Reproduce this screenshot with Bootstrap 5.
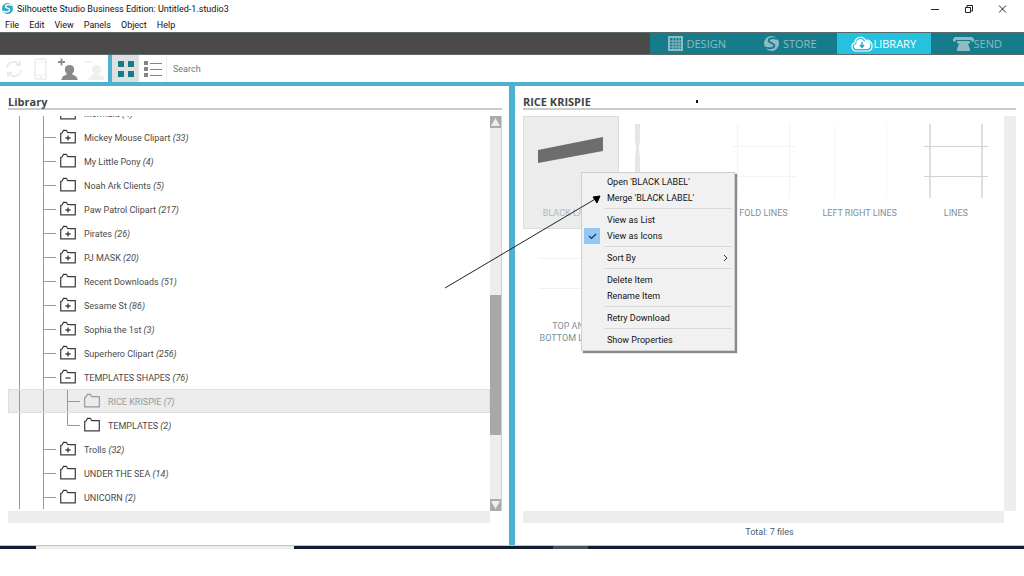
<!DOCTYPE html>
<html lang="en">
<head>
<meta charset="utf-8">
<meta name="viewport" content="width=device-width, initial-scale=1">
<title>Silhouette Studio Business Edition: Untitled-1.studio3</title>
<link href="https://cdn.jsdelivr.net/npm/bootstrap@5.3.0/dist/css/bootstrap.min.css" rel="stylesheet">
<style>
  :root { --accent: #4db1d1; --teal: #167c8c; --track: #ededed; }
  body { font: 9px/12px Roboto, "Open Sans", sans-serif; color: #111; background: #fff; }
  button, input { font: inherit; color: inherit; }
  svg { display: block; flex: none; }
  a { color: inherit; text-decoration: none; }
  .app-shell { height: 100vh; padding-bottom: 27px; }
  .title-bar { height: 17px; padding-left: 2px; }
  .win-btn { width: 34px; height: 16px; }
  .menu-bar { height: 15px; padding-left: 5px; gap: 10px; }
  .plain { border: 0; padding: 0; background: none; }
  .mode-bar { height: 23px; background: #4a4b49; border-block: 1px solid #5d6a6b; }
  .mode-tabs { width: 374px; background: var(--teal); }
  .mode-tab { flex: 1 1 0; font: 11px/20px "Open Sans", sans-serif; color: #8fbcc4; }
  .mode-tab.active { background: #25c1de; color: #fff; }
  .tool-bar { height: 31px; border-bottom: 4px solid var(--accent); }
  .tool-btn { width: 27px; }
  .tool-btn.active { background: #e0e0e0; }
  .tool-sep { width: 4px; background: var(--accent); }
  .search-box { border: 0; outline: 0; padding: 1px 6px 0; color: #555; border-left: 1px solid #eee; }
  .search-box::placeholder { color: #777; opacity: 1; }
  .pane-left { flex: 0 0 49.7%; padding: 0 7px 0 8px; }
  .pane-right { padding: 0 8px 0 8px; }
  .pane-split { width: 6px; background: var(--accent); }
  .pane-title { height: 24px; margin: 0 0 6px; padding: 8px 0 0; border-bottom: 2px solid #cbcbcb; font: bold 11px/16px "Open Sans", sans-serif; color: #444; }
  .tree-view { margin: -15px 0 0; color: #4a4a4a; }
  .tree-row { height: 24px; }
  .tree-row span { padding-top: 2px; }
  .tree-row.active { background: #ececec; outline: 1px solid #dedede; outline-offset: -1px; color: #999; }
  .tree-row .folder { margin-right: 8px; color: #3c3c3c; }
  .tree-row.active .folder { color: #999; }
  .v-track { width: 12px; background: var(--track); }
  .left-track { border-right: 1px solid #cfcfcf; }
  .arrow-btn { height: 12px; background: #aaa; }
  .thumb-bar { height: 140px; margin-top: 167px; background: #a8a8a8; }
  .h-track { height: 12px; margin-right: 12px; background: var(--track); }
  .pane-foot { height: 22px; color: #46606c; padding-top: 3px; }
  .file-grid { display: grid; grid-template-columns: repeat(5, 1fr); grid-auto-rows: 113px; }
  .file-tile { padding: 7px 4px 0; border: 1px solid transparent; color: #7c8f9a; text-align: center; }
  .file-tile.active { background: #ececec; border-color: #dcdcdc; color: #b0b7bb; }
  .file-tile svg { margin: 0 auto 9px; }
  .context-menu { left: 66px; top: 86px; width: 154px; padding: 1px 2px 2px; background: #f1f1f1; border: 1px solid #cfcfcf; box-shadow: 2px 2px 1px #8a8a8a; color: #111; z-index: 2; }
  .context-menu button { height: 16px; line-height: 17px; }
  .menu-mark { width: 16px; height: 16px; margin-right: 7px; }
  .menu-mark.on { background: #91c8f6; }
  .menu-rule { margin: 2px 0 3px 20px; border-top: 1px solid #d8d8d8; opacity: 1; }
  .pointer-line { left: 440px; top: 190px; z-index: 3; pointer-events: none; }
  .stray-dot { left: 181px; top: 14px; width: 2px; height: 3px; background: #111; }
  .task-strip { height: 4px; border-top: 1px solid #c4c6cc;
    background: linear-gradient(90deg, #121c33 3.5%, #ececec 3.5% 28.7%, #121c33 28.7% 54%, #484d60 54% 57.4%, #121c33 57.4%); }
</style>
</head>
<body>
<svg width="0" height="0" class="position-absolute" aria-hidden="true">
  <defs>
    <symbol id="swirl" viewBox="0 0 16 16"><circle cx="8" cy="8" r="8" fill="currentColor"/><path d="M14 3.500C11 1.500 5 2 5 5c0 3 6 2 6 5 0 3-5 4-10 2" fill="none" stroke="var(--cut)" stroke-width="2"/></symbol>
    <symbol id="folder" viewBox="0 0 16 16"><path d="M.7 13.800V4.500L2.200 3.800 3.500 1.300h2.800L7.800 3.700h7.500v10.100z" fill="none" stroke="currentColor" stroke-width="1.200"/></symbol>
    <symbol id="folder-plus" viewBox="0 0 16 16"><use href="#folder"/><path d="M5.500 9h5M8 6.500v5" stroke="currentColor" stroke-width="1.300"/></symbol>
    <symbol id="folder-minus" viewBox="0 0 16 16"><use href="#folder"/><path d="M5.500 9h5" stroke="currentColor" stroke-width="1.300"/></symbol>
    <symbol id="guide" viewBox="0 0 52 24"><path d="M11.500 0v24M35.500 0v24M36 12.500h12" fill="none" stroke="#999"/></symbol>
    <symbol id="guide-mid" viewBox="0 0 76 24"><path d="M11.500 0v24M35.500 0v24M59.500 0v24M60 12.500h12" fill="none" stroke="#999"/></symbol>
    <symbol id="guide-end" viewBox="0 0 76 24"><path d="M11.500 0v24M35.500 0v24M59.500 0v12.500h12.500" fill="none" stroke="#999"/></symbol>
    <symbol id="person" viewBox="0 0 18 16"><circle cx="9" cy="5" r="5"/><path d="M6 8h6v2l4 2 2 4H0l2-4 4-2z"/></symbol>
  </defs>
</svg>

<div class="app-shell d-flex flex-column position-relative overflow-hidden">
  <header>
    <div class="title-bar d-flex align-items-center">
      <svg width="11" height="11" style="--cut:#fff" color="#35a9c9"><use href="#swirl"/></svg>
      <span class="ms-1">Silhouette Studio Business Edition: Untitled-1.studio3</span>
      <div class="ms-auto d-flex me-1">
        <button class="plain win-btn" aria-label="Minimize"><svg class="mx-auto" width="10" height="10"><path d="M1 5.500h8" stroke="#222"/></svg></button>
        <button class="plain win-btn" aria-label="Restore"><svg class="mx-auto" width="10" height="10" fill="none" stroke="#222"><path d="M1.500 3.500h5v5h-5zM3 3V1.500h5.500V7H7"/></svg></button>
        <button class="plain win-btn" aria-label="Close"><svg class="mx-auto" width="10" height="10"><path d="M1 1.500l7 7M8 1.500l-7 7" stroke="#222"/></svg></button>
      </div>
    </div>
    <nav class="menu-bar d-flex align-items-center" aria-label="Main menu">
      <button class="plain">File</button><button class="plain">Edit</button><button class="plain">View</button><button class="plain">Panels</button><button class="plain">Object</button><button class="plain">Help</button>
    </nav>
    <div class="mode-bar d-flex justify-content-end">
      <nav class="mode-tabs d-flex" aria-label="Workspace">
        <button class="plain mode-tab d-flex align-items-center justify-content-center">
          <svg class="me-1" width="15" height="15" fill="none" stroke="currentColor"><path d="M1 1h13v13H1z" stroke-width="2"/><path d="M5 1v13M8 1v13M11 1v13M1 5h13M1 8h13M1 11h13"/></svg>DESIGN</button>
        <button class="plain mode-tab d-flex align-items-center justify-content-center">
          <svg class="me-1" width="15" height="15" style="--cut:#167c8c"><use href="#swirl"/></svg>STORE</button>
        <button class="plain mode-tab active d-flex align-items-center justify-content-center" aria-current="page">
          <svg width="22" height="16" viewBox="0 0 22 16"><path d="M5 15a4.300 4.300 0 0 1-1-8.400A5.500 5.500 0 0 1 14.500 4.500 5 5 0 0 1 21 10a4.800 4.800 0 0 1-4 5z" fill="none" stroke="#fff" stroke-width="1.200"/><path d="M5.500 13a2.500 2.500 0 0 1 0-5A3.800 3.800 0 0 1 13 6a3.500 3.500 0 0 1 6 3.500 3.200 3.200 0 0 1-3 3.500z" fill="#fff"/><path d="M11 6v5M9 9l2 2.500L13 9" fill="none" stroke="#25a0bd" stroke-width="1.400"/></svg>LIBRARY</button>
        <button class="plain mode-tab d-flex align-items-center justify-content-center">
          <svg width="21" height="14" viewBox="0 0 21 14" fill="currentColor"><path d="M2 0h17l2 2v2l-2 1-1-2H3L2 5 0 4V2z"/><path d="M4 4h13v2l-2 1 2 5v2H4v-2l2-5-2-1z"/></svg>SEND</button>
      </nav>
    </div>
    <div class="tool-bar d-flex">
      <button class="plain tool-btn" aria-label="Refresh"><svg class="mx-auto" width="18" height="18" fill="none" stroke="#e9e9e9" stroke-width="1.800"><path d="M2 8a7 7 0 0 1 12-4M16 10a7 7 0 0 1-12 4M15 1v4h-4M3 17v-4h4"/></svg></button>
      <button class="plain tool-btn" aria-label="Device"><svg class="mx-auto" width="13" height="22"><rect x="1" y="1" width="11" height="20" rx="1.500" fill="none" stroke="#ededed" stroke-width="1.500"/><path d="M1 4h11M1 17h11" stroke="#ededed"/><circle cx="6.500" cy="19" r="1" fill="#e6e6e6"/></svg></button>
      <button class="plain tool-btn" aria-label="Add user"><svg class="mx-auto" width="20" height="22" viewBox="0 0 20 22"><use href="#person" x="3" y="7" width="17" height="15" fill="#8a8a8a"/><path d="M0 4h7M3.500.5v7" stroke="#8a8a8a" stroke-width="1.800"/></svg></button>
      <button class="plain tool-btn" aria-label="Remove user"><svg class="mx-auto" width="20" height="22" viewBox="0 0 20 22"><use href="#person" x="3" y="7" width="17" height="15" fill="#f0f0f0"/><path d="M0 4h8" stroke="#eee" stroke-width="1.500"/></svg></button>
      <span class="tool-sep"></span>
      <button class="plain tool-btn active" aria-label="Icon view"><svg class="mx-auto" width="16" height="16" fill="#167c8c"><path d="M0 0h6v6H0zM10 0h6v6h-6zM0 10h6v6H0zM10 10h6v6h-6z"/></svg></button>
      <button class="plain tool-btn" aria-label="List view"><svg class="mx-auto" width="18" height="18" fill="#858585"><path d="M0 1h4v4H0zM0 7h4v4H0zM0 13h4v4H0zM6 3h12v1H6zM6 9h12v1H6zM6 15h12v1H6z"/></svg></button>
      <input class="search-box flex-fill" type="search" placeholder="Search" aria-label="Search">
    </div>
  </header>

  <main class="d-flex flex-fill overflow-hidden">
    <section class="pane-left d-flex flex-column">
      <h1 class="pane-title">Library</h1>
      <div class="d-flex flex-fill overflow-hidden">
        <div class="flex-fill overflow-hidden">
          <ul class="tree-view list-unstyled" id="tree"></ul>
        </div>
        <div class="v-track left-track d-flex flex-column">
          <button class="plain arrow-btn" aria-label="Scroll up"><svg class="mx-auto" width="9" height="8"><path d="M4.500 0L9 8H0z" fill="#eee"/></svg></button>
          <div class="thumb-bar"></div>
          <button class="plain arrow-btn mt-auto" aria-label="Scroll down"><svg class="mx-auto" width="9" height="8"><path d="M0 0h9L4.500 8z" fill="#eee"/></svg></button>
        </div>
      </div>
      <div class="h-track"></div>
      <div class="pane-foot"></div>
    </section>
    <div class="pane-split"></div>
    <section class="pane-right flex-fill d-flex flex-column position-relative">
      <h2 class="pane-title">RICE KRISPIE</h2>
      <span class="stray-dot position-absolute"></span>
      <div class="d-flex flex-fill">
        <div class="file-grid flex-fill align-content-start">
          <a href="#" class="file-tile active"><svg width="66" height="74"><path d="M0 26L65 13v14L0 39z" fill="#6d6d6d"/></svg>BLACK LABEL</a>
          <a href="#" class="file-tile" aria-label="Template"><svg width="66" height="74"><path d="M1 0h5v16l-1 8 1 10v40H1V34l1-9-1-9z" fill="#e6e6e6"/></svg></a>
          <a href="#" class="file-tile"><svg width="66" height="74" stroke="#f3f3f3"><path d="M7.500 0v74M59.500 0v74M2 22.500h64M2 52.500h64"/></svg>FOLD LINES</a>
          <a href="#" class="file-tile"><svg width="66" height="74" stroke="#f6f6f6"><path d="M7.500 0v74M59.500 0v74"/></svg>LEFT RIGHT LINES</a>
          <a href="#" class="file-tile"><svg width="66" height="74" stroke="#d2d2d2"><path d="M7 0v74M59 0v74" stroke="#dfdfdf" stroke-width="2"/><path d="M1 22.500h64M1 52.500h64"/></svg>LINES</a>
          <a href="#" class="file-tile"><svg width="66" height="74" stroke="#f1f1f1"><path d="M0 21.500h66M0 51.500h66"/></svg>TOP AND<br>BOTTOM LINES</a>
        </div>
        <div class="v-track"></div>
      </div>
      <div class="h-track"></div>
      <div class="pane-foot text-center">Total: 7 files</div>

      <div class="context-menu position-absolute d-flex flex-column" role="menu">
        <button class="plain d-flex text-start" role="menuitem"><span class="menu-mark"></span>Open 'BLACK LABEL'</button>
        <button class="plain d-flex text-start" role="menuitem"><span class="menu-mark"></span>Merge 'BLACK LABEL'</button>
        <hr class="menu-rule">
        <button class="plain d-flex text-start" role="menuitem"><span class="menu-mark"></span>View as List</button>
        <button class="plain d-flex text-start" role="menuitem"><span class="menu-mark on"><svg width="16" height="16"><path d="M5 8l2.500 2.500L12 6" fill="none" stroke="#234" stroke-width="1.200"/></svg></span>View as Icons</button>
        <hr class="menu-rule">
        <button class="plain d-flex text-start align-items-center" role="menuitem"><span class="menu-mark"></span>Sort By<svg class="ms-auto me-1" width="5" height="8"><path d="M1 1l3 3-3 3" fill="none" stroke="#333"/></svg></button>
        <hr class="menu-rule">
        <button class="plain d-flex text-start" role="menuitem"><span class="menu-mark"></span>Delete Item</button>
        <button class="plain d-flex text-start" role="menuitem"><span class="menu-mark"></span>Rename Item</button>
        <hr class="menu-rule">
        <button class="plain d-flex text-start" role="menuitem"><span class="menu-mark"></span>Retry Download</button>
        <hr class="menu-rule">
        <button class="plain d-flex text-start" role="menuitem"><span class="menu-mark"></span>Show Properties</button>
      </div>
    </section>
  </main>
  <div class="task-strip"></div>

  <svg class="pointer-line position-absolute" width="170" height="104"><path d="M5 98L157 8" stroke="#222"/><path d="M160 6l-7 1 4 6z" fill="#000" stroke="#000"/></svg>
</div>

<script src="https://cdn.jsdelivr.net/npm/bootstrap@5.3.0/dist/js/bootstrap.bundle.min.js"></script>
<script>
  // name, item count, folder icon, tree guide, selected
  const folders = [
    ['Mermaid', 4, 'folder', 'guide'],
    ['Mickey Mouse Clipart', 33, 'folder-plus', 'guide'],
    ['My Little Pony', 4, 'folder', 'guide'],
    ['Noah Ark Clients', 5, 'folder', 'guide'],
    ['Paw Patrol Clipart', 217, 'folder-plus', 'guide'],
    ['Pirates', 26, 'folder-plus', 'guide'],
    ['PJ MASK', 20, 'folder-plus', 'guide'],
    ['Recent Downloads', 51, 'folder', 'guide'],
    ['Sesame St', 86, 'folder-plus', 'guide'],
    ['Sophia the 1st', 3, 'folder-plus', 'guide'],
    ['Superhero Clipart', 256, 'folder-plus', 'guide'],
    ['TEMPLATES SHAPES', 76, 'folder-minus', 'guide'],
    ['RICE KRISPIE', 7, 'folder', 'guide-mid', true],
    ['TEMPLATES', 2, 'folder', 'guide-end'],
    ['Trolls', 32, 'folder-plus', 'guide'],
    ['UNDER THE SEA', 14, 'folder', 'guide'],
    ['UNICORN', 2, 'folder', 'guide']
  ];
  document.getElementById('tree').innerHTML = folders.map(([name, count, icon, guide, active]) =>
    `<li><a href="#" class="tree-row d-flex align-items-center${active ? ' active' : ''}">
      <svg width="${guide === 'guide' ? 52 : 76}" height="24"><use href="#${guide}"/></svg>
      <svg class="folder" width="16" height="16"><use href="#${icon}"/></svg>
      <span>${name} <em>(${count})</em></span></a></li>`).join('');
</script>
</body>
</html>
